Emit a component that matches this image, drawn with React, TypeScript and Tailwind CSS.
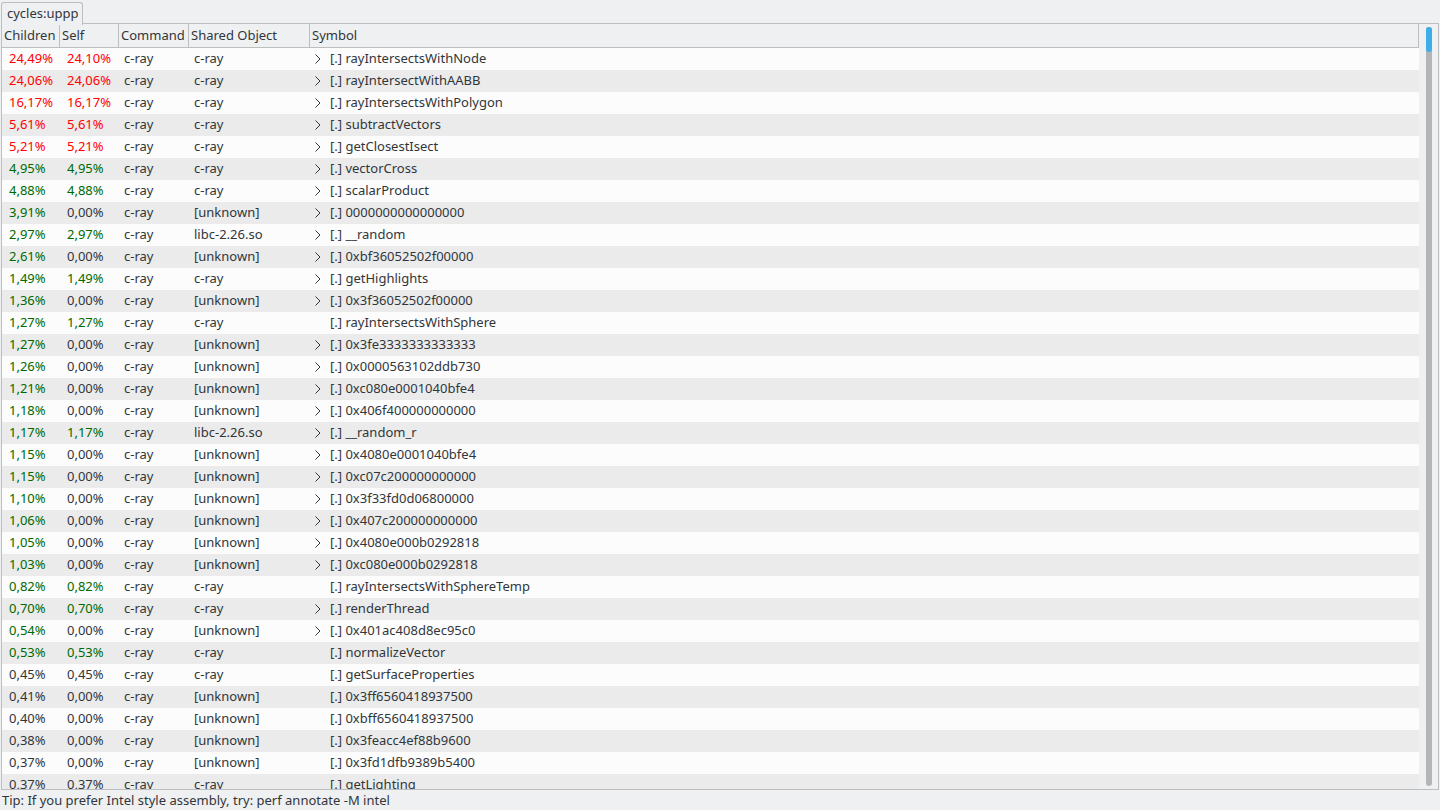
import React from 'react';

type Row = {
  children: number;
  self: number;
  command: string;
  dso: string;
  symbol: string;
  expandable: boolean;
};

// [children, self, dso, symbol, expandable]
const raw: [number, number, string, string, boolean][] = [
  [24.49, 24.1, 'c-ray', 'rayIntersectsWithNode', true],
  [24.06, 24.06, 'c-ray', 'rayIntersectWithAABB', true],
  [16.17, 16.17, 'c-ray', 'rayIntersectsWithPolygon', true],
  [5.61, 5.61, 'c-ray', 'subtractVectors', true],
  [5.21, 5.21, 'c-ray', 'getClosestIsect', true],
  [4.95, 4.95, 'c-ray', 'vectorCross', true],
  [4.88, 4.88, 'c-ray', 'scalarProduct', true],
  [3.91, 0, '[unknown]', '0000000000000000', true],
  [2.97, 2.97, 'libc-2.26.so', '__random', true],
  [2.61, 0, '[unknown]', '0xbf36052502f00000', true],
  [1.49, 1.49, 'c-ray', 'getHighlights', true],
  [1.36, 0, '[unknown]', '0x3f36052502f00000', true],
  [1.27, 1.27, 'c-ray', 'rayIntersectsWithSphere', false],
  [1.27, 0, '[unknown]', '0x3fe3333333333333', true],
  [1.26, 0, '[unknown]', '0x0000563102ddb730', true],
  [1.21, 0, '[unknown]', '0xc080e0001040bfe4', true],
  [1.18, 0, '[unknown]', '0x406f400000000000', true],
  [1.17, 1.17, 'libc-2.26.so', '__random_r', true],
  [1.15, 0, '[unknown]', '0x4080e0001040bfe4', true],
  [1.15, 0, '[unknown]', '0xc07c200000000000', true],
  [1.1, 0, '[unknown]', '0x3f33fd0d06800000', true],
  [1.06, 0, '[unknown]', '0x407c200000000000', true],
  [1.05, 0, '[unknown]', '0x4080e000b0292818', true],
  [1.03, 0, '[unknown]', '0xc080e000b0292818', true],
  [0.82, 0.82, 'c-ray', 'rayIntersectsWithSphereTemp', false],
  [0.7, 0.7, 'c-ray', 'renderThread', true],
  [0.54, 0, '[unknown]', '0x401ac408d8ec95c0', true],
  [0.53, 0.53, 'c-ray', 'normalizeVector', false],
  [0.45, 0.45, 'c-ray', 'getSurfaceProperties', false],
  [0.41, 0, '[unknown]', '0x3ff6560418937500', false],
  [0.4, 0, '[unknown]', '0xbff6560418937500', false],
  [0.38, 0, '[unknown]', '0x3feacc4ef88b9600', false],
  [0.37, 0, '[unknown]', '0x3fd1dfb9389b5400', false],
  [0.37, 0.37, 'c-ray', 'getLighting', false],
];

const rows: Row[] = raw.map(([c, s, dso, symbol, expandable]) => ({
  children: c,
  self: s,
  command: 'c-ray',
  dso,
  symbol,
  expandable,
}));

const pct = (v: number) => v.toFixed(2).replace('.', ',') + '%';

const pctColor = (v: number) => {
  if (v >= 5) return 'text-[#ff0000]';
  if (v >= 0.5) return 'text-[#006a00]';
  return 'text-[#31363b]';
};

const Chevron = () => (
  <svg width="8" height="12" viewBox="0 0 8 12" className="shrink-0">
    <polyline points="1.5,1.5 6,6 1.5,10.5" fill="none" stroke="#31363b" strokeWidth="1" />
  </svg>
);

const App: React.FC = () => {
  return (
    <div
      className="w-[1440px] h-[810px] bg-[#eff0f1] text-[#31363b] text-[13px] flex flex-col overflow-hidden"
      style={{ fontFamily: '"Noto Sans", "DejaVu Sans", sans-serif' }}
    >
      {/* Tab bar */}
      <div className="h-[24px] flex items-end shrink-0">
        <div className="ml-[1px] w-[82px] h-[23px] border border-b-0 border-[#bcbebf] rounded-t-[3px] flex items-center pl-[5px] bg-[#eff0f1] relative top-[1px]">
          cycles:uppp
        </div>
        <div className="flex-1 border-b border-[#bcbebf] mr-[1px]" />
      </div>

      {/* Panel */}
      <div className="flex-1 min-h-0 flex border-l border-r border-b border-[#bcbebf] mr-[1px] ml-[1px]">
        <div className="flex-1 min-w-0 flex flex-col">
          {/* Header */}
          <div className="h-[24px] shrink-0 flex border-b border-r border-[#bcbebf] bg-[#eff0f1]">
            <div className="w-[58px] pl-[2px] pt-[1px] flex items-center border-r border-[#bcbebf]">Children</div>
            <div className="w-[59px] pl-[2px] pt-[1px] flex items-center border-r border-[#bcbebf]">Self</div>
            <div className="w-[70px] pl-[2px] pt-[1px] flex items-center border-r border-[#bcbebf]">Command</div>
            <div className="w-[121px] pl-[2px] pt-[1px] flex items-center border-r border-[#bcbebf]">Shared Object</div>
            <div className="flex-1 pl-[2px] pt-[1px] flex items-center">Symbol</div>
          </div>
          {/* Rows */}
          <div className="flex-1 min-h-0 overflow-hidden bg-[#fcfcfc]">
            {rows.map((r, i) => (
              <div
                key={i}
                className={`h-[22px] flex items-center whitespace-nowrap ${i % 2 === 1 ? 'bg-[#ebebeb]' : 'bg-[#fcfcfc]'}`}
              >
                <div className={`w-[58px] pl-[7px] ${pctColor(r.children)}`}>{pct(r.children)}</div>
                <div className={`w-[59px] pl-[7px] ${pctColor(r.self)}`}>{pct(r.self)}</div>
                <div className="w-[70px] pl-[5px]">{r.command}</div>
                <div className="w-[121px] pl-[5px]">{r.dso}</div>
                <div className="flex-1 flex items-center pl-[4px] gap-[8px]">
                  <span className="w-[8px] flex items-center">{r.expandable && <Chevron />}</span>
                  <span>[.] {r.symbol}</span>
                </div>
              </div>
            ))}
          </div>
        </div>

        {/* Scrollbar */}
        <div className="w-[19px] shrink-0 flex justify-center pt-[3px] pb-[3px]">
          <div className="w-[6px] h-full rounded-full bg-[#b4b5b6] flex flex-col">
            <div className="h-[25px] rounded-full bg-[#3daee9]" />
          </div>
        </div>
      </div>

      {/* Status bar */}
      <div className="h-[20px] shrink-0 flex items-center pl-[2px] pt-[1px]">
        Tip: If you prefer Intel style assembly, try: perf annotate -M intel
      </div>
    </div>
  );
};

export default App;
